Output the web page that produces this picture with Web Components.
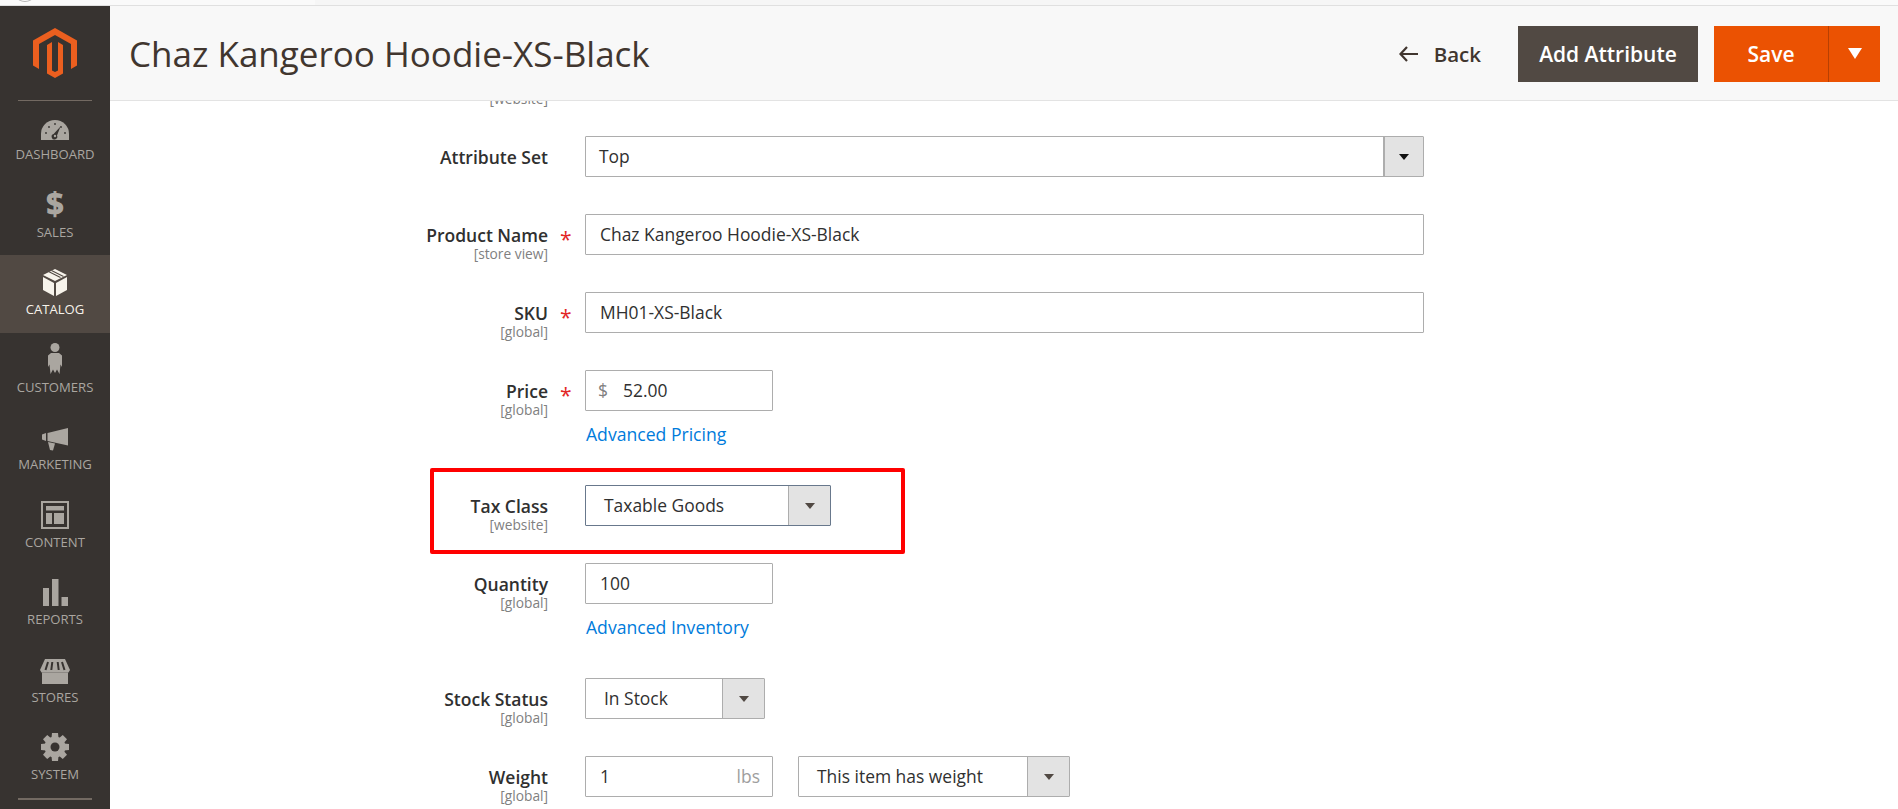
<!DOCTYPE html>
<html>
<head>
<meta charset="utf-8">
<title>Chaz Kangeroo Hoodie-XS-Black</title>
<style>
  html, body { margin: 0; height: 100%; overflow: hidden; background: #fff; font-family: "Open Sans", sans-serif; }
  admin-shell { height: 100vh; }
</style>
</head>
<body>
<admin-shell>
  <admin-sidebar slot="sidebar">
    <nav-item label="Dashboard" icon="dashboard"></nav-item>
    <nav-item label="Sales" icon="sales"></nav-item>
    <nav-item label="Catalog" icon="catalog" active></nav-item>
    <nav-item label="Customers" icon="customers"></nav-item>
    <nav-item label="Marketing" icon="marketing"></nav-item>
    <nav-item label="Content" icon="content"></nav-item>
    <nav-item label="Reports" icon="reports"></nav-item>
    <nav-item label="Stores" icon="stores"></nav-item>
    <nav-item label="System" icon="system"></nav-item>
  </admin-sidebar>
  <page-header slot="header" title="Chaz Kangeroo Hoodie-XS-Black"></page-header>
  <product-form>
    <form-field label="Attribute Set">
      <select-box width="839" button="40" strong>Top</select-box>
    </form-field>
    <form-field label="Product Name" scope="[store view]" required>
      <text-box width="839">Chaz Kangeroo Hoodie-XS-Black</text-box>
    </form-field>
    <form-field label="SKU" scope="[global]" required>
      <text-box width="839">MH01-XS-Black</text-box>
    </form-field>
    <form-field label="Price" scope="[global]" required link="Advanced Pricing">
      <text-box width="188" prefix="$">52.00</text-box>
    </form-field>
    <form-field label="Tax Class" scope="[website]" marked>
      <select-box width="246" button="42" focused>Taxable Goods</select-box>
    </form-field>
    <form-field label="Quantity" scope="[global]" link="Advanced Inventory">
      <text-box width="188">100</text-box>
    </form-field>
    <form-field label="Stock Status" scope="[global]">
      <select-box width="180" button="42">In Stock</select-box>
    </form-field>
    <form-field label="Weight" scope="[global]">
      <text-box width="188" suffix="lbs">1</text-box>
      <select-box width="272" button="42">This item has weight</select-box>
    </form-field>
  </product-form>
</admin-shell>

<script>
const ICONS = {
  dashboard: `<svg width="28" height="21" viewBox="0 0 28 21"><path fill="#aaa6a0" d="M0 20V14A14 14 0 0 1 28 14V20Z"/><g fill="#373330"><circle cx="5" cy="13" r=".9"/><circle cx="8" cy="7" r=".9"/><circle cx="14" cy="4" r=".9"/><circle cx="20" cy="7" r=".9"/><circle cx="24" cy="13" r=".9"/><path d="M19.5 6.5 16 15.5A2.8 2.8 0 1 1 12.6 14Z"/></g><circle cx="14" cy="16" r="1.2" fill="#aaa6a0"/></svg>`,
  sales: `<span class="glyph">$</span>`,
  catalog: `<svg width="24" height="27" viewBox="0 0 24 27"><g fill="currentColor"><path d="M12 0 24 6 12 12 0 6Z"/><path d="M0 8 11 14V27L0 21Z"/><path d="M13 14 24 8V21L13 27Z"/></g><path d="M5.500 2.500 17.500 8.500M8.500 1.500 20.500 7.500" stroke="#514943" stroke-width="1.100" fill="none"/></svg>`,
  customers: `<svg width="16" height="31" viewBox="0 0 16 31"><g fill="currentColor"><circle cx="8" cy="4.500" r="4.500"/><path d="M4 10H12L15 12.500V24L13.500 21.500 12.500 31 10 26.500 8 30 6 26.500 3.500 31 2.500 21.500 1 24V12.500Z"/></g></svg>`,
  marketing: `<svg width="26" height="23" viewBox="0 0 26 23"><g fill="currentColor"><path d="M0 6.500 4 5V13L0 11.500Z"/><path d="M5.500 5 26 0V17.500L5.500 13Z"/><path d="M6 14 13 15.500 11 22.500 8 22Z"/></g></svg>`,
  content: `<svg width="28" height="28" viewBox="0 0 28 28"><path fill="currentColor" fill-rule="evenodd" d="M0 0H28V28H0ZM2 2V26H26V2Z"/><g fill="currentColor"><path d="M5 5H23V9.500H5Z"/><path d="M5 12H11V23H5Z"/><path d="M13 12H23V23H13Z"/></g></svg>`,
  reports: `<svg width="25" height="27" viewBox="0 0 25 27"><g fill="currentColor"><path d="M0 9H6V27H0Z"/><path d="M9 0H15.500V27H9Z"/><path d="M18.500 18H25V27H18.500Z"/></g></svg>`,
  stores: `<svg width="30" height="25" viewBox="0 0 30 25"><g fill="currentColor"><path d="M2 13.500H28V25H2Z"/><path d="M5 0H25L30 11 28.500 13.500H1.500L0 11Z"/></g><path d="M8 3 5.500 11M12.300 3 11.300 11M17.700 3 18.700 11M22 3 24.500 11" stroke="#373330" stroke-width="2" fill="none"/></svg>`,
  system: `<svg width="28" height="28" viewBox="0 0 28 28"><g fill="currentColor"><circle cx="14" cy="14" r="10.500"/><path d="M11 0H17L17.500 5H10.500Z"/><path transform="rotate(45 14 14)" d="M11 0H17L17.500 5H10.500Z"/><path transform="rotate(90 14 14)" d="M11 0H17L17.500 5H10.500Z"/><path transform="rotate(135 14 14)" d="M11 0H17L17.500 5H10.500Z"/><path transform="rotate(180 14 14)" d="M11 0H17L17.500 5H10.500Z"/><path transform="rotate(225 14 14)" d="M11 0H17L17.500 5H10.500Z"/><path transform="rotate(270 14 14)" d="M11 0H17L17.500 5H10.500Z"/><path transform="rotate(315 14 14)" d="M11 0H17L17.500 5H10.500Z"/></g><circle cx="14" cy="14" r="4.500" fill="#373330"/></svg>`
};

class AdminShell extends HTMLElement {
  constructor() {
    super();
    this.attachShadow({ mode: "open" });
    this.shadowRoot.innerHTML = `
      <style>
        :host { display: flex; flex-direction: column; color: #41362f; }
        /* leftover of the browser bar cut off by the screenshot */
        .topstrip { height: 5px; background: linear-gradient(90deg, #fafafa 315px, #f6f6f6 315px, #f6f6f6 1600px, #fafafa 1600px); border-bottom: 1px solid #e0e0e0; flex: none; position: relative; overflow: hidden; }
        .topstrip i { position: absolute; left: 17px; top: -8px; width: 14px; height: 8px; border: 1px solid #b5b5b5; border-radius: 50%; }
        .body { flex: 1; display: flex; min-height: 0; }
        .main { flex: 1; display: flex; flex-direction: column; min-width: 0; position: relative; }
        .scroll { flex: 1; overflow: hidden; min-height: 0; }
      </style>
      <div class="topstrip"><i></i></div>
      <div class="body">
        <slot name="sidebar"></slot>
        <div class="main">
          <slot name="header"></slot>
          <div class="scroll"><slot></slot></div>
        </div>
      </div>
    `;
  }
}

class AdminSidebar extends HTMLElement {
  constructor() {
    super();
    this.attachShadow({ mode: "open" });
    this.shadowRoot.innerHTML = `
      <style>
        :host { display: block; width: 110px; flex: none; background: #373330; overflow: hidden; }
        .logo { height: 94px; display: flex; justify-content: center; padding-top: 22px; box-sizing: border-box; }
        .line { height: 1px; margin: 0 18px -1px; background: #736a62; position: relative; }
        .end { height: 2px; margin: 0 18px; background: #736a62; }
      </style>
      <div class="logo">
        <svg width="44" height="50" viewBox="0 0 44 50"><path fill="#eb5f1f" d="M22 0 44 12.500V37.500L38 41V16L22 7 6 16V41L0 37.500V12.500ZM22 50 14 45.500V17L19 14V42.500L22 44 25 42.500V14L30 17V45.500Z"/></svg>
      </div>
      <div class="line"></div>
      <slot></slot>
      <div class="end"></div>
    `;
  }
}

class NavItem extends HTMLElement {
  constructor() {
    super();
    this.attachShadow({ mode: "open" });
  }

  connectedCallback() {
    const icon = this.getAttribute("icon");
    this.shadowRoot.innerHTML = `
      <style>
        :host { display: flex; flex-direction: column; align-items: center; height: 77.5px; color: #aaa6a0; box-sizing: border-box; }
        :host([active]) { background: #514943; color: #f7f3eb; }
        .icon { height: 41px; display: flex; align-items: flex-end; justify-content: center; }
        .icon svg { display: block; }
        .glyph { font: 800 31px/32px "Open Sans", sans-serif; }
        .text { font-size: 13.1px; line-height: 18px; margin-top: 4px; text-transform: uppercase; white-space: nowrap; }
      </style>
      <div class="icon">${ICONS[icon]}</div>
      <div class="text">${this.getAttribute("label")}</div>
    `;
  }
}

class PageHeader extends HTMLElement {
  constructor() {
    super();
    this.attachShadow({ mode: "open" });
  }

  connectedCallback() {
    this.shadowRoot.innerHTML = `
      <style>
        :host { display: flex; align-items: center; height: 95px; box-sizing: border-box; flex: none; background: #f8f8f8; border-bottom: 1px solid #e3e3e3; padding: 1px 18px 0 19px; }
        h1 { flex: 1; margin: -1px 0 0; font-size: 35px; font-weight: 400; color: #41362f; white-space: nowrap; }
        .back { display: flex; align-items: center; gap: 16px; color: #41362f; font-size: 20.5px; font-weight: 600; margin-right: 37px; }
        .btn { height: 56px; display: flex; align-items: center; justify-content: center; font-size: 21px; font-weight: 600; color: #fff; box-sizing: border-box; }
        .add { width: 180px; background: #514943; margin-right: 16px; }
        .save { display: flex; background: #eb5202; }
        .save .label { width: 114px; }
        .save .split { width: 52px; border-left: 1px solid #b84002; }
      </style>
      <h1>${this.getAttribute("title")}</h1>
      <div class="back">
        <svg width="19" height="16" viewBox="0 0 19 16"><path d="M8 1 1.500 8 8 15M1.500 8H19" fill="none" stroke="#41362f" stroke-width="2.200"/></svg>
        <span>Back</span>
      </div>
      <div class="btn add">Add Attribute</div>
      <div class="save">
        <div class="btn label">Save</div>
        <div class="btn split"><svg width="14" height="11" viewBox="0 0 14 11"><path d="M0 0H14L7 11Z" fill="#fff"/></svg></div>
      </div>
    `;
  }
}

class ProductForm extends HTMLElement {
  constructor() {
    super();
    this.attachShadow({ mode: "open" });
    this.shadowRoot.innerHTML = `
      <style>
        :host { display: block; }
        /* scope text of the row that has scrolled away under the header */
        .cut { width: 438px; box-sizing: border-box; text-align: right; font-size: 13.75px; line-height: 16px; color: #808080; margin: -10px 0 29px; }
      </style>
      <div class="cut">[website]</div>
      <slot></slot>
    `;
  }
}

class FormField extends HTMLElement {
  constructor() {
    super();
    this.attachShadow({ mode: "open" });
  }

  connectedCallback() {
    const scope = this.getAttribute("scope");
    const link = this.getAttribute("link");
    this.shadowRoot.innerHTML = `
      <style>
        :host { display: grid; grid-template-columns: 438px 37px 839px; margin-bottom: 37px; position: relative; align-items: start; }
        .label { text-align: right; padding-top: 11px; height: 41px; box-sizing: border-box; color: #303030; }
        .name { font-size: 17.5px; line-height: 21px; font-weight: 600; white-space: nowrap; }
        .scope { font-size: 13.75px; line-height: 16px; color: #808080; }
        .star { color: #e22626; font-size: 21px; line-height: 26px; padding: 12px 0 0 12px; height: 41px; box-sizing: border-box; }
        .controls { display: flex; gap: 25px; }
        a { display: block; margin: 13px 0 3px 1px; font-size: 17.6px; line-height: 21px; color: #007bdb; text-decoration: none; }
        .mark { position: absolute; left: 320px; width: 475px; top: -17px; height: 86px; box-sizing: border-box; border: 4px solid #f00; border-radius: 2px; pointer-events: none; }
      </style>
      <div class="label">
        <div class="name">${this.getAttribute("label")}</div>
        ${scope ? `<div class="scope">${scope}</div>` : ""}
      </div>
      <div class="star">${this.hasAttribute("required") ? "*" : ""}</div>
      <div>
        <div class="controls"><slot></slot></div>
        ${link ? `<a href="#">${link}</a>` : ""}
      </div>
      ${this.hasAttribute("marked") ? `<div class="mark"></div>` : ""}
    `;
  }
}

class TextBox extends HTMLElement {
  constructor() {
    super();
    this.attachShadow({ mode: "open" });
  }

  connectedCallback() {
    const prefix = this.getAttribute("prefix");
    const suffix = this.getAttribute("suffix");
    this.shadowRoot.innerHTML = `
      <style>
        :host { display: flex; align-items: center; height: 41px; box-sizing: border-box; width: ${this.getAttribute("width")}px; flex: none; background: #fff; border: 1px solid #adadad; border-radius: 1px; padding: 0 12px 1px 14px; font-size: 17.45px; color: #303030; white-space: nowrap; }
        .value { flex: 1; }
        .prefix { color: #808080; margin: 0 15px 0 -2px; }
        .suffix { color: #9e9e9e; }
      </style>
      ${prefix ? `<span class="prefix">${prefix}</span>` : ""}
      <span class="value"><slot></slot></span>
      ${suffix ? `<span class="suffix">${suffix}</span>` : ""}
    `;
  }
}

class SelectBox extends HTMLElement {
  constructor() {
    super();
    this.attachShadow({ mode: "open" });
  }

  connectedCallback() {
    const strong = this.hasAttribute("strong");
    this.shadowRoot.innerHTML = `
      <style>
        :host { display: flex; align-items: stretch; height: 41px; box-sizing: border-box; width: ${this.getAttribute("width")}px; flex: none; background: #fff; border: 1px solid #adadad; border-radius: 1px; font-size: 17.45px; color: #303030; white-space: nowrap; }
        :host([focused]) { border-color: #68788c; }
        .value { flex: 1; display: flex; align-items: center; padding: 0 0 1px ${strong ? 13 : 18}px; }
        .arrow { width: ${this.getAttribute("button")}px; display: flex; align-items: center; justify-content: center; background: #e3e3e3; border-left: 1px solid #adadad; box-sizing: border-box; }
        ${strong ? ".arrow { margin-top: -1px; border-top: 1px solid #adadad; border-left-width: 2px; }" : ""}
      </style>
      <div class="value"><slot></slot></div>
      <div class="arrow"><svg width="10" height="6" viewBox="0 0 10 6"><path d="M0 0H10L5 6Z" fill="${strong ? "#111" : "#514943"}"/></svg></div>
    `;
  }
}

customElements.define("admin-shell", AdminShell);
customElements.define("admin-sidebar", AdminSidebar);
customElements.define("nav-item", NavItem);
customElements.define("page-header", PageHeader);
customElements.define("product-form", ProductForm);
customElements.define("form-field", FormField);
customElements.define("text-box", TextBox);
customElements.define("select-box", SelectBox);
</script>
</body>
</html>
